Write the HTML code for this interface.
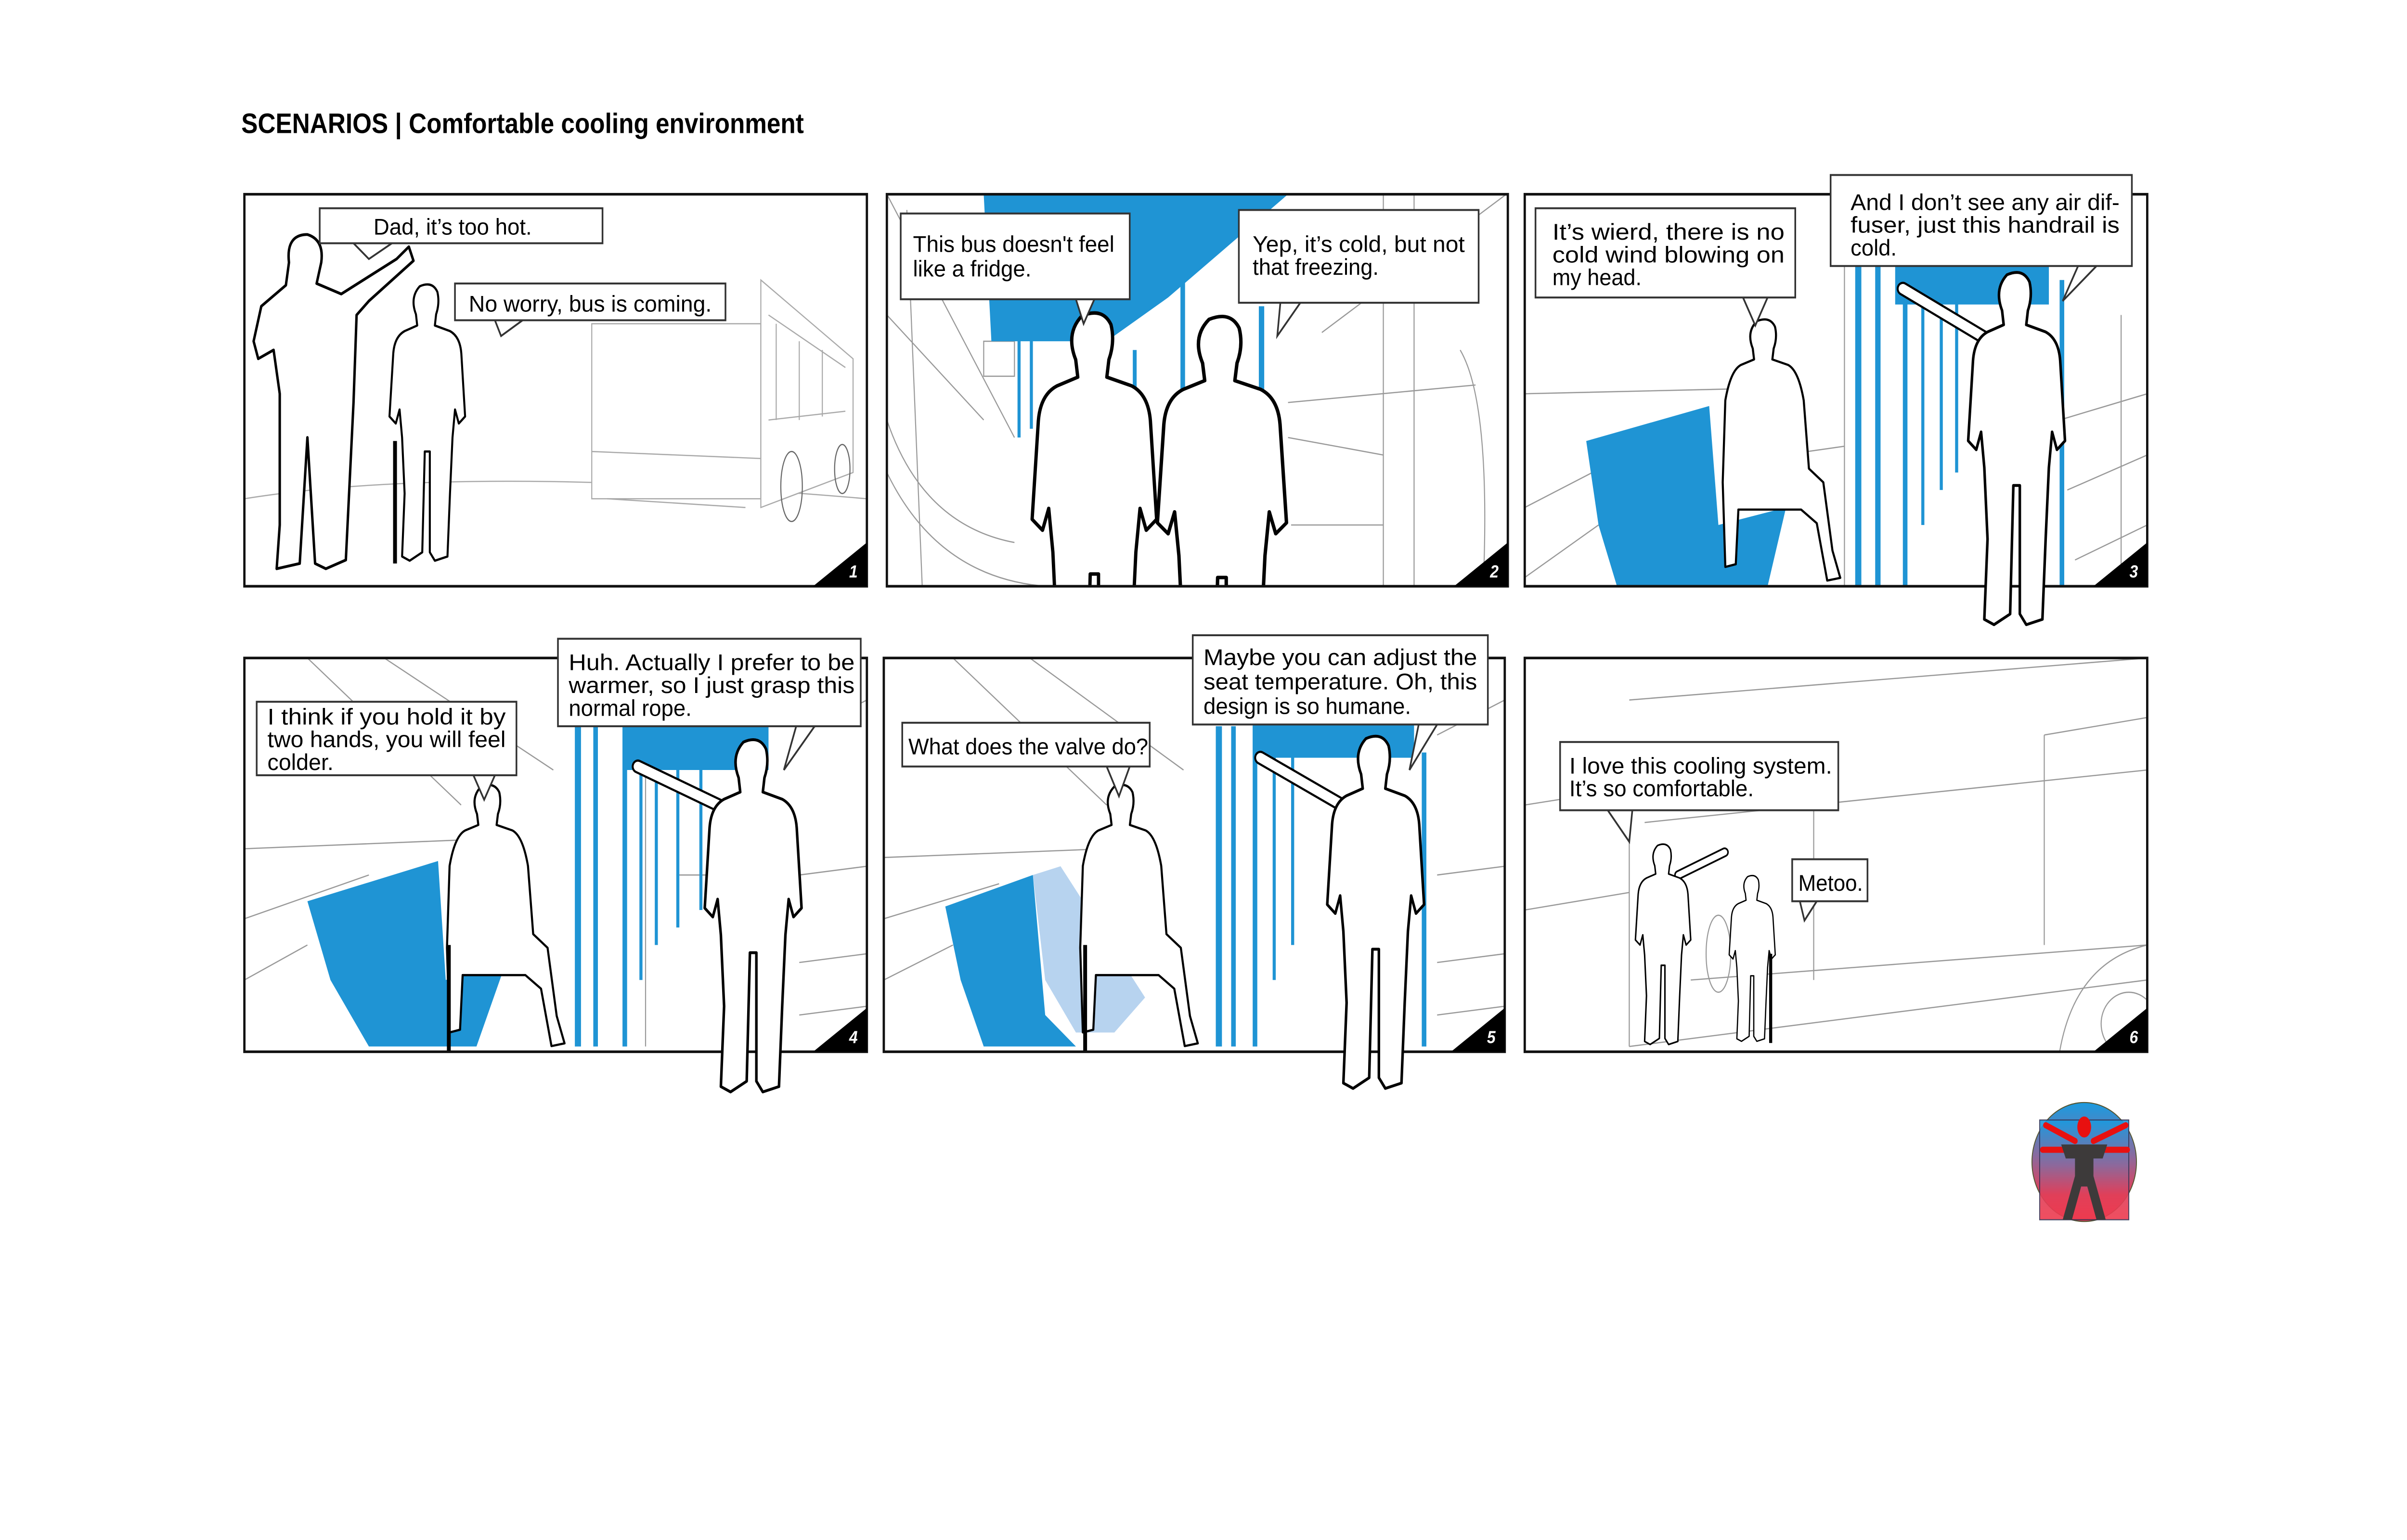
<!DOCTYPE html>
<html><head><meta charset="utf-8"><style>
html,body{margin:0;padding:0;background:#fff;overflow:hidden;width:100%;height:100%;}
svg{display:block;width:100vw;height:100vh;}
text{font-family:"Liberation Sans",sans-serif;}
</style></head><body>
<svg viewBox="0 0 1566 880" preserveAspectRatio="none" xmlns="http://www.w3.org/2000/svg">
<defs>
<path id="man" d="M-6,2 Q4,-2 8,6 Q10,14 7,22 L6,30 L18,34 Q26,38 27,50 L30,95 L25,100 L22,90 L20,110 L18,150 L16,195 L6,198 L2,192 L2,120 L-2,120 L-4,192 L-14,198 L-20,195 L-18,150 L-20,110 L-22,90 L-25,100 L-30,95 L-27,50 Q-26,38 -18,34 L-8,30 L-9,22 Q-14,10 -6,2 Z" fill="#fff" stroke="#000" stroke-width="1.6" stroke-linejoin="round"/>
<path id="seat" d="M-6,2 Q4,-2 8,6 Q10,14 7,22 L6,30 L18,34 Q26,38 30,60 L34,110 L45,120 L52,170 L58,190 L48,192 L40,150 L28,140 L-20,140 L-22,180 L-30,182 L-32,120 L-30,60 Q-26,38 -18,34 L-8,30 L-9,22 Q-14,10 -6,2 Z" fill="#fff" stroke="#000" stroke-width="1.6" stroke-linejoin="round"/>
<clipPath id="c1"><rect x="159" y="111" width="405" height="224"/></clipPath>
<clipPath id="c2"><rect x="577" y="111" width="404" height="224"/></clipPath>
<clipPath id="c3"><rect x="992" y="111" width="405" height="224"/></clipPath>
<clipPath id="c4"><rect x="159" y="376" width="405" height="225"/></clipPath>
<clipPath id="c5"><rect x="575" y="376" width="404" height="225"/></clipPath>
<clipPath id="c6"><rect x="992" y="376" width="405" height="225"/></clipPath>
<linearGradient id="lg" x1="0" y1="0" x2="0" y2="1"><stop offset="0" stop-color="#1a9be0"/><stop offset="0.45" stop-color="#8a6a9e"/><stop offset="0.75" stop-color="#e0405a"/><stop offset="1" stop-color="#ef3a4e"/></linearGradient>
</defs>

<text x="157" y="76" font-size="16" font-weight="bold" textLength="366" lengthAdjust="spacingAndGlyphs">SCENARIOS | Comfortable cooling environment</text>

<!-- Panel 1 -->
<g clip-path="url(#c1)" stroke="#aaa" stroke-width="0.7" fill="none">
<path d="M159,285 Q300,265 564,285"/>
<rect x="385" y="185" width="110" height="100" fill="#fff"/>
<path d="M495,160 L555,205 L555,270 L495,290 Z" fill="#fff"/>
<path d="M500,180 L550,210 M500,240 L550,235 M505,185 L505,240 M520,195 L520,240 M535,200 L535,238"/>
<path d="M385,258 L495,262 M395,285 L485,290"/>
<ellipse cx="515" cy="278" rx="7" ry="20" stroke="#666"/>
<ellipse cx="548" cy="268" rx="5" ry="14" stroke="#666"/>
</g>
<path d="M188,150 Q186,134 200,134 Q211,137 209,150 L206,162 L222,168 L258,148 L266,141 L269,149 L240,172 L232,180 L230,230 L225,320 L212,325 L205,322 L200,250 L195,322 L180,325 L182,300 L182,225 L178,200 L168,205 L165,195 L170,175 L186,163 Z" fill="#fff" stroke="#000" stroke-width="1.6" stroke-linejoin="round"/>
<line x1="257" y1="252" x2="257" y2="322" stroke="#000" stroke-width="2.5"/>
<use href="#man" transform="translate(278,162) scale(0.82,0.8)"/>
<rect x="159" y="111" width="405" height="224" fill="none" stroke="#111" stroke-width="1.5"/>
<path d="M529,335 L564,310 L564,335 Z" fill="#000"/>
<text x="558" y="330" font-size="10" font-weight="bold" font-style="italic" fill="#fff" text-anchor="end">1</text>

<!-- Panel 2 -->
<g clip-path="url(#c2)">
<g stroke="#999" stroke-width="0.7" fill="none">
<path d="M577,111 L660,250 M577,180 L640,240 M577,240 Q600,300 660,310 M577,270 Q610,330 680,335 M900,111 L900,335 M920,111 L920,335 M950,200 Q970,230 965,335 M838,230 L960,220 M838,250 L900,260 M840,300 L900,300 M590,120 L600,335 M980,111 L860,190"/>
<rect x="640" y="195" width="20" height="20"/>
</g>
<polygon points="640,111 838,111 760,170 720,195 645,195" fill="#1f94d4"/>
<rect x="768" y="150" width="3" height="160" fill="#1f94d4"/>
<rect x="819" y="175" width="3.5" height="160" fill="#1f94d4"/>
<rect x="737" y="200" width="2.5" height="105" fill="#1f94d4"/>
<rect x="662" y="190" width="2" height="60" fill="#1f94d4"/>
<rect x="670" y="190" width="2" height="55" fill="#1f94d4"/>
<use href="#man" transform="translate(712,178) scale(1.35,1.25)"/>
<use href="#man" transform="translate(795,180) scale(1.4,1.25)"/>
</g>
<rect x="577" y="111" width="404" height="224" fill="none" stroke="#111" stroke-width="1.5"/>
<path d="M946,335 L981,310 L981,335 Z" fill="#000"/>
<text x="975" y="330" font-size="10" font-weight="bold" font-style="italic" fill="#fff" text-anchor="end">2</text>

<!-- Panel 3 -->
<g clip-path="url(#c3)">
<g stroke="#999" stroke-width="0.7" fill="none">
<path d="M992,225 L1140,222 M992,290 L1080,250 M992,330 L1040,300 M1200,150 L1200,335 M1340,240 L1397,225 M1345,280 L1397,260 M1350,320 L1397,300 M1160,260 L1200,255 M1380,180 L1380,335 M1300,111 L1300,150"/>
</g>
<polygon points="1032,252 1112,232 1118,300 1162,290 1150,335 1052,335 1040,300" fill="#1f94d4"/>
<rect x="1233" y="152" width="100" height="22" fill="#1f94d4"/>
<rect x="1207" y="152" width="4" height="183" fill="#1f94d4"/>
<rect x="1220" y="152" width="3.5" height="183" fill="#1f94d4"/>
<rect x="1238" y="152" width="3" height="183" fill="#1f94d4"/>
<rect x="1250" y="160" width="2" height="140" fill="#1f94d4"/>
<rect x="1262" y="160" width="2" height="120" fill="#1f94d4"/>
<rect x="1272" y="160" width="2" height="110" fill="#1f94d4"/>
<rect x="1340" y="160" width="3" height="175" fill="#1f94d4"/>
<use href="#seat" transform="translate(1148,182) scale(0.85,0.78)"/>
</g>
<rect x="992" y="111" width="405" height="224" fill="none" stroke="#111" stroke-width="1.5"/>
<path d="M1362,335 L1397,310 L1397,335 Z" fill="#000"/>
<text x="1391" y="330" font-size="10" font-weight="bold" font-style="italic" fill="#fff" text-anchor="end">3</text>
<path d="M1295,195 L1238,165" stroke="#000" stroke-width="8" stroke-linecap="round"/>
<path d="M1295,195 L1238,165" stroke="#fff" stroke-width="5.5" stroke-linecap="round"/>
<use href="#man" transform="translate(1312,155) scale(1.05,1.02)"/>

<!-- Panel 4 -->
<g clip-path="url(#c4)">
<g stroke="#999" stroke-width="0.7" fill="none">
<path d="M159,485 L300,480 M159,525 L240,500 M159,560 L200,540 M200,376 L300,460 M250,376 L360,440 M420,440 L420,598 M440,500 L470,500 M520,420 L564,400 M520,500 L564,495 M520,550 L564,545 M520,580 L564,575"/>
</g>
<polygon points="200,515 285,492 290,560 330,548 310,598 240,598 215,560" fill="#1f94d4"/>
<rect x="405" y="415" width="95" height="25" fill="#1f94d4"/>
<rect x="374" y="415" width="4" height="183" fill="#1f94d4"/>
<rect x="386" y="415" width="3" height="183" fill="#1f94d4"/>
<rect x="405" y="415" width="3" height="183" fill="#1f94d4"/>
<rect x="416" y="430" width="2" height="130" fill="#1f94d4"/>
<rect x="426" y="430" width="2" height="110" fill="#1f94d4"/>
<rect x="440" y="430" width="2" height="100" fill="#1f94d4"/>
<rect x="455" y="430" width="2" height="90" fill="#1f94d4"/>
<use href="#seat" transform="translate(318,448) scale(0.85,0.78)"/>
<line x1="292" y1="540" x2="292" y2="601" stroke="#000" stroke-width="2.5"/>
</g>
<rect x="159" y="376" width="405" height="225" fill="none" stroke="#111" stroke-width="1.5"/>
<path d="M529,601 L564,576 L564,601 Z" fill="#000"/>
<text x="558" y="596" font-size="10" font-weight="bold" font-style="italic" fill="#fff" text-anchor="end">4</text>
<path d="M472,462 L415,438" stroke="#000" stroke-width="8" stroke-linecap="round"/>
<path d="M472,462 L415,438" stroke="#fff" stroke-width="5.5" stroke-linecap="round"/>
<use href="#man" transform="translate(490,422) scale(1.05,1.02)"/>

<!-- Panel 5 -->
<g clip-path="url(#c5)">
<g stroke="#999" stroke-width="0.7" fill="none">
<path d="M575,490 L720,485 M575,525 L650,505 M575,560 L620,540 M620,376 L720,460 M670,376 L770,440 M935,420 L979,400 M935,500 L979,495 M935,550 L979,545 M935,580 L979,575"/>
</g>
<polygon points="615,518 672,500 680,580 700,598 640,598 625,560" fill="#1f94d4"/>
<polygon points="672,500 690,495 745,570 725,590 700,590 680,560" fill="#b7d3ef"/>
<rect x="815" y="413" width="105" height="20" fill="#1f94d4"/>
<rect x="791" y="415" width="4" height="183" fill="#1f94d4"/>
<rect x="801" y="415" width="3" height="183" fill="#1f94d4"/>
<rect x="815" y="415" width="3" height="183" fill="#1f94d4"/>
<rect x="828" y="430" width="2" height="130" fill="#1f94d4"/>
<rect x="840" y="430" width="2" height="110" fill="#1f94d4"/>
<rect x="925" y="430" width="3" height="168" fill="#1f94d4"/>
<use href="#seat" transform="translate(730,448) scale(0.85,0.78)"/>
<line x1="706" y1="540" x2="706" y2="601" stroke="#000" stroke-width="2.5"/>
</g>
<rect x="575" y="376" width="404" height="225" fill="none" stroke="#111" stroke-width="1.5"/>
<path d="M944,601 L979,576 L979,601 Z" fill="#000"/>
<text x="973" y="596" font-size="10" font-weight="bold" font-style="italic" fill="#fff" text-anchor="end">5</text>
<path d="M877,462 L820,433" stroke="#000" stroke-width="8" stroke-linecap="round"/>
<path d="M877,462 L820,433" stroke="#fff" stroke-width="5.5" stroke-linecap="round"/>
<use href="#man" transform="translate(895,420) scale(1.05,1.02)"/>

<!-- Panel 6 -->
<g clip-path="url(#c6)">
<g stroke="#999" stroke-width="0.7" fill="none">
<path d="M992,460 L1100,445 M992,520 L1060,510 M1060,400 L1397,376 M1070,470 L1397,440 M1060,470 L1060,598 M1180,460 L1180,560 M1100,560 L1397,540 M1330,420 L1330,540 M1330,420 L1397,410 M1060,598 L1397,560"/>
<path d="M1340,601 Q1350,550 1397,540" />
<circle cx="1385" cy="585" r="18"/>
<ellipse cx="1118" cy="545" rx="8" ry="22"/>
</g>
<path d="M1092,500 L1122,487" stroke="#000" stroke-width="5.5" stroke-linecap="round"/>
<path d="M1092,500 L1122,487" stroke="#fff" stroke-width="3.5" stroke-linecap="round"/>
<use href="#man" transform="translate(1082,482) scale(0.6,0.58)"/>
<use href="#man" transform="translate(1140,500) scale(0.5,0.48)"/>
<line x1="1152" y1="545" x2="1152" y2="596" stroke="#000" stroke-width="2"/>
</g>
<rect x="992" y="376" width="405" height="225" fill="none" stroke="#111" stroke-width="1.5"/>
<path d="M1362,601 L1397,576 L1397,601 Z" fill="#000"/>
<text x="1391" y="596" font-size="10" font-weight="bold" font-style="italic" fill="#fff" text-anchor="end">6</text>

<!-- Speech bubbles -->
<g fill="#fff" stroke="#333" stroke-width="1.1" stroke-linejoin="miter">
<polygon points="230,139 240,148 255,139"/>
<rect x="208" y="119" width="184" height="20"/>
<polygon points="322,183 326,192 340,183"/>
<rect x="296" y="162" width="176" height="21"/>
<polygon points="700,171 705,185 712,171"/>
<rect x="586" y="122" width="149" height="49"/>
<polygon points="833,173 831,192 846,173"/>
<rect x="806" y="120" width="156" height="53"/>
<polygon points="1134,170 1142,186 1150,170"/>
<rect x="999" y="119" width="169" height="51"/>
<polygon points="1352,152 1342,172 1364,152"/>
<rect x="1191" y="100" width="196" height="52"/>
<polygon points="308,443 315,457 322,443"/>
<rect x="167" y="401" width="169" height="42"/>
<polygon points="518,415 510,440 530,415"/>
<rect x="363" y="365" width="197" height="50"/>
<polygon points="720,438 728,455 735,438"/>
<rect x="587" y="413" width="161" height="25"/>
<polygon points="923,414 917,440 935,414"/>
<rect x="776" y="363" width="192" height="51"/>
<polygon points="1046,463 1060,481 1062,463"/>
<rect x="1015" y="424" width="181" height="39"/>
<polygon points="1171,515 1174,526 1182,515"/>
<rect x="1166" y="491" width="49" height="24"/>
</g>
<g font-size="13" fill="#000">
<text x="243" y="134" textLength="103" lengthAdjust="spacingAndGlyphs">Dad, it’s too hot.</text>
<text x="305" y="178" textLength="158" lengthAdjust="spacingAndGlyphs">No worry, bus is coming.</text>
<text x="594" y="144" textLength="131" lengthAdjust="spacingAndGlyphs">This bus doesn't feel</text>
<text x="594" y="158" textLength="77" lengthAdjust="spacingAndGlyphs">like a fridge.</text>
<text x="815" y="144" textLength="138" lengthAdjust="spacingAndGlyphs">Yep, it’s cold, but not</text>
<text x="815" y="157" textLength="82" lengthAdjust="spacingAndGlyphs">that freezing.</text>
<text x="1010" y="137" textLength="151" lengthAdjust="spacingAndGlyphs">It’s wierd, there is no</text>
<text x="1010" y="150" textLength="151" lengthAdjust="spacingAndGlyphs">cold wind blowing on</text>
<text x="1010" y="163" textLength="58" lengthAdjust="spacingAndGlyphs">my head.</text>
<text x="1204" y="120" textLength="175" lengthAdjust="spacingAndGlyphs">And I don’t see any air dif-</text>
<text x="1204" y="133" textLength="175" lengthAdjust="spacingAndGlyphs">fuser, just this handrail is</text>
<text x="1204" y="146" textLength="30" lengthAdjust="spacingAndGlyphs">cold.</text>
<text x="174" y="414" textLength="155" lengthAdjust="spacingAndGlyphs">I think if you hold it by</text>
<text x="174" y="427" textLength="155" lengthAdjust="spacingAndGlyphs">two hands, you will feel</text>
<text x="174" y="440" textLength="43" lengthAdjust="spacingAndGlyphs">colder.</text>
<text x="370" y="383" textLength="186" lengthAdjust="spacingAndGlyphs">Huh. Actually I prefer to be</text>
<text x="370" y="396" textLength="186" lengthAdjust="spacingAndGlyphs">warmer, so I just grasp this</text>
<text x="370" y="409" textLength="80" lengthAdjust="spacingAndGlyphs">normal rope.</text>
<text x="591" y="431" textLength="156" lengthAdjust="spacingAndGlyphs">What does the valve do?</text>
<text x="783" y="380" textLength="178" lengthAdjust="spacingAndGlyphs">Maybe you can adjust the</text>
<text x="783" y="394" textLength="178" lengthAdjust="spacingAndGlyphs">seat temperature. Oh, this</text>
<text x="783" y="408" textLength="135" lengthAdjust="spacingAndGlyphs">design is so humane.</text>
<text x="1021" y="442" textLength="171" lengthAdjust="spacingAndGlyphs">I love this cooling system.</text>
<text x="1021" y="455" textLength="120" lengthAdjust="spacingAndGlyphs">It’s so comfortable.</text>
<text x="1170" y="509" textLength="42" lengthAdjust="spacingAndGlyphs">Metoo.</text>
</g>

<!-- Logo -->
<g>
<circle cx="1356" cy="664" r="34" fill="url(#lg)" stroke="#553" stroke-width="0.6"/>
<rect x="1327" y="640" width="58" height="57" fill="url(#lg)" opacity="0.9" stroke="#335" stroke-width="0.6"/>
<g stroke="#e81010" stroke-width="3.5" stroke-linecap="round">
<line x1="1350" y1="652" x2="1331" y2="643"/>
<line x1="1362" y1="652" x2="1383" y2="643"/>
<line x1="1345" y1="657" x2="1329" y2="657"/>
<line x1="1368" y1="657" x2="1384" y2="657"/>
</g>
<ellipse cx="1356" cy="644" rx="4.5" ry="6" fill="#e81010"/>
<path d="M1341,654 L1371,654 L1368,662 L1362,662 L1362,672 L1370,697 L1364,697 L1358,678 L1354,678 L1348,697 L1342,697 L1350,672 L1350,662 L1344,662 Z" fill="#3d3a3a"/>
</g>
</svg>
</body></html>
